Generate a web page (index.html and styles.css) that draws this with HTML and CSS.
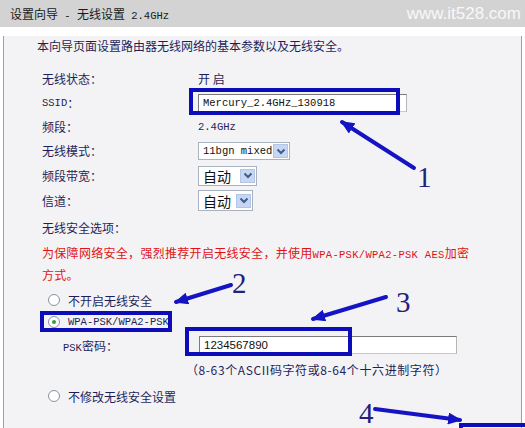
FILE: index.html
```html
<!DOCTYPE html>
<html lang="zh-CN">
<head>
<meta charset="utf-8">
<title>设置向导 - 无线设置 2.4GHz</title>
<link rel="stylesheet" href="styles.css">
</head>
<body>
<div class="header">
  <span class="title">设置向导<span class="m"> - </span>无线设置<span class="m"> 2.4GHz</span></span>
  <span class="wm">www.it528.com</span>
</div>
<div class="panel">
  <p class="intro">本向导页面设置路由器无线网络的基本参数以及无线安全。</p>
  <div class="form">
    <div class="lbl">无线状态：</div><div class="val">开 启</div>
    <div class="lbl"><span class="m">SSID</span>：</div>
    <div class="val"><div class="input ssid"><span class="m">Mercury_2.4GHz_130918</span></div></div>
    <div class="lbl">频段：</div><div class="val"><span class="m">2.4GHz</span></div>
    <div class="lbl">无线模式：</div>
    <div class="val"><div class="sel s1"><span class="m">11bgn mixed</span><span class="dd"><svg width="10" height="7" viewBox="0 0 10 7"><polyline points="1.5,1.5 5,5 8.5,1.5" fill="none" stroke="#3f5b92" stroke-width="2"/></svg></span></div></div>
    <div class="lbl">频段带宽：</div>
    <div class="val"><div class="sel s2"><span class="cn">自动</span><span class="dd"><svg width="10" height="7" viewBox="0 0 10 7"><polyline points="1.5,1.5 5,5 8.5,1.5" fill="none" stroke="#3f5b92" stroke-width="2"/></svg></span></div></div>
    <div class="lbl">信道：</div>
    <div class="val"><div class="sel s3"><span class="cn">自动</span><span class="dd"><svg width="10" height="7" viewBox="0 0 10 7"><polyline points="1.5,1.5 5,5 8.5,1.5" fill="none" stroke="#3f5b92" stroke-width="2"/></svg></span></div></div>
  </div>
  <div class="sec">无线安全选项：</div>
  <p class="warn">为保障网络安全，强烈推荐开启无线安全，并使用<span class="m">WPA-PSK/WPA2-PSK AES</span>加密<br>方式。</p>
  <div class="opt first"><span class="radio"></span><span>不开启无线安全</span></div>
  <div class="opt"><span class="radio on"></span><span class="m">WPA-PSK/WPA2-PSK</span></div>
  <div class="psk"><span class="plbl"><span class="m">PSK</span>密码：</span><div class="input pw">1234567890</div></div>
  <div class="hint">（8-63个ASCII码字符或8-64个十六进制字符）</div>
  <div class="opt last"><span class="radio"></span><span>不修改无线安全设置</span></div>
</div>
<svg class="marks" width="525" height="428" viewBox="0 0 525 428">
  <defs>
    <marker id="ah" markerUnits="userSpaceOnUse" markerWidth="14" markerHeight="12" refX="12" refY="6" orient="auto">
      <path d="M0,0 L14,6 L0,12 z" fill="#1414c4"/>
    </marker>
  </defs>
  <g fill="none" stroke="#0c0cb8" stroke-width="4">
    <rect x="191" y="90" width="207" height="23"/>
    <rect x="42" y="313" width="128" height="17"/>
    <rect x="187" y="329" width="163" height="25"/>
    <rect x="461" y="425" width="80" height="20"/>
  </g>
  <g stroke="#1414c4" stroke-width="4" stroke-linecap="round">
    <line x1="414" y1="168" x2="342" y2="122" marker-end="url(#ah)"/>
    <line x1="231" y1="285" x2="176" y2="302" marker-end="url(#ah)"/>
    <line x1="386" y1="297" x2="313" y2="319" marker-end="url(#ah)"/>
    <line x1="375" y1="409" x2="460" y2="420" marker-end="url(#ah)"/>
  </g>
  <g class="num">
    <text x="417" y="187">1</text>
    <text x="232" y="293">2</text>
    <text x="396" y="312">3</text>
    <text x="359" y="423">4</text>
  </g>
</svg>
</body>
</html>
```

FILE: styles.css
```css
* {
  box-sizing: border-box;
  margin: 0;
  padding: 0;
}

body {
  width: 525px;
  height: 428px;
  overflow: hidden;
  background: #ffffff;
  font-family: "Noto Sans CJK SC", sans-serif;
  font-size: 12px;
  color: #1f1f58;
  position: relative;
}

.m {
  font-family: "Liberation Mono", monospace;
  font-size: 10.5px;
}

.header {
  height: 27px;
  background: #d3d3d3;
  display: flex;
  align-items: center;
  justify-content: space-between;
  padding: 0 4px 0 10px;
}

.title {
  color: #1a1a1a;
  font-size: 12px;
  line-height: 16px;
  margin-top: 3px;
  white-space: pre;
}

.wm {
  font-family: "Liberation Sans", sans-serif;
  font-size: 17px;
  color: #f8f8f8;
  margin-top: 1px;
}

.panel {
  margin-left: 3px;
  width: 519px;
  height: 397px;
  border: 1px solid #cf8b8b;
  border-top: 0;
  background: #f3f3f5;
  padding-left: 33px;
}

.intro {
  line-height: 20px;
  margin-top: 9px;
}

.form {
  display: grid;
  grid-template-columns: 156px 1fr;
  grid-template-rows: 24px 24px 24px 24px 25px 25px;
  align-items: center;
  margin-top: 11px;
  margin-left: 5px;
}

.lbl,
.val {
  line-height: 20px;
  display: flex;
  align-items: center;
}

.input {
  height: 18px;
  background: #ffffff;
  border: 1px solid #7b7b7b;
  border-right-color: #b5b5b5;
  border-bottom-color: #c9c9c9;
  display: flex;
  align-items: center;
  padding-left: 4px;
  color: #111;
}

.ssid {
  width: 209px;
}

.sel {
  display: flex;
  align-items: center;
  justify-content: space-between;
  background: #ffffff;
  border: 1px solid #a9b2bf;
  padding: 0 1px 0 4px;
  color: #111;
}

.s1 {
  width: 92px;
  height: 18px;
}

.s2 {
  width: 59px;
  height: 20px;
}

.s3 {
  width: 55px;
  height: 21px;
}

.cn {
  font-size: 14px;
  line-height: 18px;
}

.dd {
  width: 15px;
  height: 14px;
  background: #c8d7f1;
  border: 1px solid #b3c5e6;
  display: flex;
  align-items: center;
  justify-content: center;
}

.sec {
  margin-left: 5px;
  margin-top: 5px;
  line-height: 20px;
}

.warn {
  margin-left: 5px;
  margin-top: 5px;
  line-height: 19px;
  color: #e01414;
  letter-spacing: 0.3px;
}

.opt {
  display: flex;
  align-items: center;
  gap: 8px;
  height: 22px;
  margin-left: 11px;
}

.opt.first {
  margin-top: 5px;
}

.opt.last {
  margin-top: 4px;
}

.radio {
  width: 12px;
  height: 12px;
  border: 1px solid #8693a3;
  border-radius: 50%;
  background: #ffffff;
  display: flex;
  align-items: center;
  justify-content: center;
}

.radio.on::after {
  content: "";
  width: 4px;
  height: 4px;
  border-radius: 50%;
  background: #37a030;
}

.psk {
  display: flex;
  align-items: center;
  height: 24px;
}

.plbl {
  width: 162px;
  padding-left: 26px;
}

.pw {
  width: 258px;
  font-family: "Liberation Sans", sans-serif;
  font-size: 11.5px;
}

.hint {
  margin-top: 2px;
  margin-left: 149px;
  line-height: 22px;
  letter-spacing: 0.6px;
}

.marks {
  position: absolute;
  top: 0;
  left: 0;
  pointer-events: none;
}

.num text {
  font-family: "Liberation Serif", serif;
  font-size: 29px;
  fill: #22227e;
}
```
